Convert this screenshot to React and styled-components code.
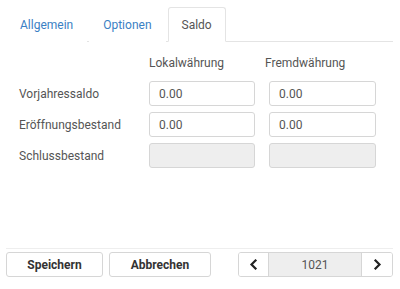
import React from 'react'
import styled, { createGlobalStyle } from 'styled-components'

const GlobalStyle = createGlobalStyle`
  html, body {
    margin: 0;
    padding: 0;
    background: #fff;
  }
  body {
    font-family: Roboto, "Liberation Sans", sans-serif;
    font-size: 12px;
    color: #555;
  }
`

const Page = styled.div`
  display: flex;
  flex-direction: column;
  height: 289px;
  padding: 0 7px 0 6px;
  box-sizing: border-box;
`

const TabBar = styled.div`
  display: flex;
  gap: 2px;
  margin-top: 7px;
  border-bottom: 1px solid #e4e4e4;
`

const Tab = styled.div`
  height: 33px;
  padding: 0 13px;
  display: flex;
  align-items: center;
  margin-bottom: -1px;
  border: 1px solid ${props => props.active ? '#e4e4e4' : 'transparent'};
  border-bottom-color: ${props => props.active ? '#fff' : 'transparent'};
  border-radius: 3px 3px 0 0;
  background: #fff;
  color: ${props => props.active ? '#555' : '#3a7fc4'};
`

const Form = styled.div`
  flex: 1;
  display: grid;
  grid-template-columns: 116px 106px 107px;
  column-gap: 14px;
  row-gap: 6px;
  align-content: start;
  padding: 12px 0 0 13px;
`

const Head = styled.div`
  grid-column: ${props => props.col};
  margin-left: ${props => props.shift || 0}px;
  height: 18px;
  line-height: 18px;
  margin-bottom: 3px;
  white-space: nowrap;
`

const Label = styled.div`
  display: flex;
  align-items: center;
  height: 25px;
  white-space: nowrap;
`

const Input = styled.input`
  box-sizing: border-box;
  width: 100%;
  height: 25px;
  padding: 0 9px;
  border: 1px solid #d6d6d6;
  border-radius: 3px;
  font: inherit;
  color: #555;
  background: #fff;
  outline: none;

  &:disabled {
    background: #eeeeee;
  }
`

const Footer = styled.div`
  display: flex;
  align-items: flex-start;
  gap: 6px;
  border-top: 1px solid #eeeeee;
  padding: 3px 0 12px;
`

const Button = styled.button`
  box-sizing: border-box;
  width: ${props => props.w}px;
  height: 25px;
  border: 1px solid #d6d6d6;
  border-radius: 3px;
  background: #fff;
  font: inherit;
  font-weight: 700;
  color: #333;
  padding: 0;
`

const Pager = styled.div`
  margin-left: auto;
  display: flex;
  height: 25px;
  box-sizing: border-box;
  border: 1px solid #d6d6d6;
  border-radius: 3px;
  overflow: hidden;
`

const PagerButton = styled.button`
  width: ${props => props.w}px;
  height: 100%;
  border: none;
  background: #fff;
  padding: 0;
  display: flex;
  align-items: center;
  justify-content: center;
`

const PagerValue = styled.div`
  width: 92px;
  border-left: 1px solid #d6d6d6;
  border-right: 1px solid #d6d6d6;
  background: #eeeeee;
  display: flex;
  align-items: center;
  justify-content: center;
  color: #555;
`

function Chevron({ dir }) {
  const d = dir === 'left' ? 'M6.5 1.5 L2.5 5.5 L6.5 9.5' : 'M2.5 1.5 L6.5 5.5 L2.5 9.5'
  return (
    <svg width="9" height="11" viewBox="0 0 9 11">
      <path d={d} fill="none" stroke="#222" strokeWidth="2.2" strokeLinecap="square" />
    </svg>
  )
}

const rows = [
  { label: 'Vorjahressaldo', a: '0.00', b: '0.00' },
  { label: 'Eröffnungsbestand', a: '0.00', b: '0.00' },
  { label: 'Schlussbestand', disabled: true },
]

export default function App() {
  return (
    <>
      <GlobalStyle />
      <Page>
        <TabBar>
          <Tab>Allgemein</Tab>
          <Tab>Optionen</Tab>
          <Tab active>Saldo</Tab>
        </TabBar>
        <Form>
          <Head col={2}>Lokalwährung</Head>
          <Head col={3} shift={-4}>Fremdwährung</Head>
          {rows.map(r => (
            <React.Fragment key={r.label}>
              <Label>{r.label}</Label>
              <Input defaultValue={r.a || ''} disabled={r.disabled} />
              <Input defaultValue={r.b || ''} disabled={r.disabled} />
            </React.Fragment>
          ))}
        </Form>
        <Footer>
          <Button w={97}>Speichern</Button>
          <Button w={102}>Abbrechen</Button>
          <Pager>
            <PagerButton w={29}><Chevron dir="left" /></PagerButton>
            <PagerValue>1021</PagerValue>
            <PagerButton w={30}><Chevron dir="right" /></PagerButton>
          </Pager>
        </Footer>
      </Page>
    </>
  )
}
